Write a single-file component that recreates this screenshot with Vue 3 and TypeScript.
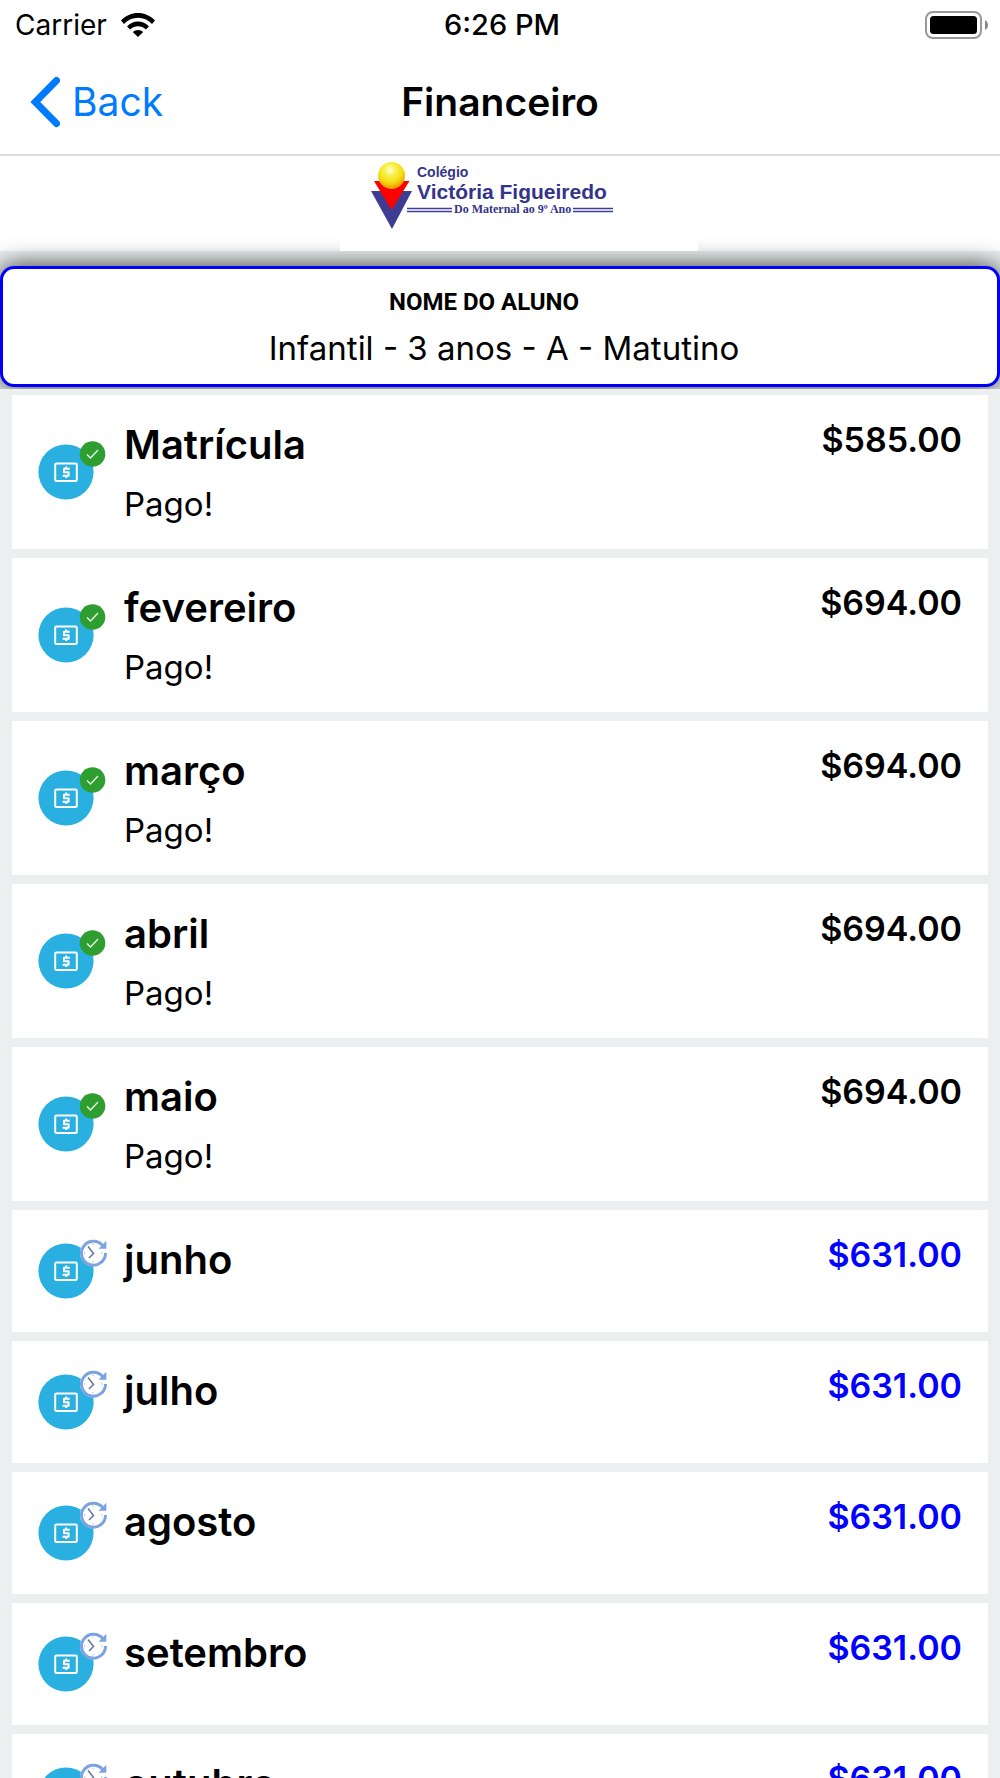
<script setup lang="ts">
interface Installment {
  title: string
  amount: number
  paid: boolean
}

const installments: Installment[] = [
  { title: 'Matrícula', amount: 585, paid: true },
  { title: 'fevereiro', amount: 694, paid: true },
  { title: 'março', amount: 694, paid: true },
  { title: 'abril', amount: 694, paid: true },
  { title: 'maio', amount: 694, paid: true },
  { title: 'junho', amount: 631, paid: false },
  { title: 'julho', amount: 631, paid: false },
  { title: 'agosto', amount: 631, paid: false },
  { title: 'setembro', amount: 631, paid: false },
  { title: 'outubro', amount: 631, paid: false },
]

const money = (value: number): string => `$${value.toFixed(2)}`
</script>

<template>
  <div class="screen">
    <div class="status">
      <div class="carrier">
        <span>Carrier</span>
        <svg class="wifi" viewBox="0 0 34 24" aria-hidden="true">
          <path d="M0 7.6C9-2.4 25-2.4 34 7.6L31 10.9C23.500 2.800 10.500 2.800 3 10.900Z" />
          <path d="M6 13.400C12 7 22 7 28 13.400L24.800 16.500C20.400 12.200 13.600 12.200 9.200 16.500Z" />
          <path d="M11.800 19C14.600 16.300 19.400 16.300 22.200 19L17 24Z" />
        </svg>
      </div>
      <span class="clock">6:26 PM</span>
      <svg class="battery" viewBox="0 0 64 28" aria-hidden="true">
        <rect x="1" y="1" width="55" height="26" rx="7" fill="#fff" stroke="#989898" stroke-width="2" />
        <rect x="5" y="5" width="47" height="18" rx="3.500" fill="#000" />
        <path d="M60 9C64 11 64 17 60 19Z" fill="#888" />
      </svg>
    </div>

    <header class="nav">
      <button class="back" type="button">
        <svg class="chevron" viewBox="0 0 30 52" aria-hidden="true">
          <path d="M26.500 4.500L5.300 26L26.500 47.500" fill="none" stroke="#007aff" stroke-width="7" stroke-linecap="round" />
        </svg>
        <span>Back</span>
      </button>
      <h1>Financeiro</h1>
    </header>

    <div class="brand">
      <svg class="logo" viewBox="0 0 358 95" role="img" aria-label="Colégio Victória Figueiredo">
        <defs>
          <radialGradient id="ball" cx="0.45" cy="0.3" r="0.72">
            <stop offset="0" stop-color="#fffde0" />
            <stop offset="0.3" stop-color="#f8f04a" />
            <stop offset="0.65" stop-color="#f3dc10" />
            <stop offset="1" stop-color="#f08a00" />
          </radialGradient>
        </defs>
        <rect width="358" height="95" fill="#fff" />
        <path d="M31 35H72L52 73Z" fill="#3d3d94" />
        <path d="M34 25H69.500L51.500 54Z" fill="#fe0000" />
        <circle cx="51.500" cy="19.500" r="13.500" fill="url(#ball)" />
        <text class="brand-sans" x="77" y="21" font-size="14">Colégio</text>
        <text class="brand-sans" x="77" y="43" font-size="21">Victória Figueiredo</text>
        <text class="brand-serif" x="114" y="57" font-size="12">Do Maternal ao 9º Ano</text>
        <path d="M67 52.500H112M67 55.500H112M233 52.500H273M233 55.500H273" stroke="#3d3d94" stroke-width="1.500" />
      </svg>
    </div>

    <section class="student">
      <h2>NOME DO ALUNO</h2>
      <p>Infantil - 3 anos - A - Matutino</p>
    </section>

    <ul class="list">
      <li v-for="item in installments" :key="item.title" class="card">
        <svg class="icon" viewBox="0 0 80 76" aria-hidden="true">
          <circle cx="38" cy="38" r="27.600" fill="#2ab0e0" />
          <rect x="27.200" y="29.500" width="21.600" height="17.500" rx="1.200" fill="none" stroke="#fff" stroke-width="2" />
          <path
            d="M41.800 34.800H36V38.200H40.600V41.800H34.600M38.200 32.600V34.800M38.200 41.800V44"
            fill="none"
            stroke="#fff"
            stroke-width="2"
            stroke-linejoin="round"
          />
          <g v-if="item.paid">
            <circle cx="64.500" cy="20" r="12.800" fill="#2f9e30" />
            <path d="M59 20.500L62.500 24L70 16" fill="none" stroke="#e8f6e8" stroke-width="1.300" />
          </g>
          <g v-else>
            <circle cx="65.500" cy="20" r="13.500" fill="#fff" />
            <path d="M74.500 12.200A12 12 0 1 0 77.500 20" fill="none" stroke="#7ba3e2" stroke-width="3" />
            <path d="M78.300 7.800V15.800L70.500 15.800Z" fill="#7ba3e2" />
            <path d="M60 13.500L65.500 20.500L61 25" fill="none" stroke="#62789c" stroke-width="1.500" />
            <path d="M65 10.500V12M65 28V29.500M56 20H57.500M73 20H74.500" stroke="#a9b8d0" stroke-width="1" />
          </g>
        </svg>
        <div class="info">
          <h3>{{ item.title }}</h3>
          <p v-if="item.paid">Pago!</p>
        </div>
        <span class="price" :class="{ due: !item.paid }">{{ money(item.amount) }}</span>
      </li>
    </ul>
  </div>
</template>

<style>
body {
  background: #ebeff0;
}
</style>

<style scoped>
.screen {
  display: flex;
  flex-direction: column;
  height: 100vh;
  overflow: hidden;
  background: #ebeff0;
  color: #000;
  font-family: Inter, "Liberation Sans", sans-serif;
}

h1,
h2,
h3,
p,
ul {
  margin: 0;
  padding: 0;
}

.status,
.nav {
  display: grid;
  grid-template-columns: 1fr auto 1fr;
  align-items: center;
  flex: none;
  background: #fff;
}

.status {
  height: 50px;
  padding: 0 11px 0 15px;
  font-size: 28px;
  line-height: 34px;
}

.carrier {
  display: flex;
  align-items: center;
  gap: 14px;
}

.wifi {
  width: 34px;
  height: 24px;
}

.clock {
  font-size: 29px;
  font-weight: 500;
}

.battery {
  justify-self: end;
  width: 64px;
  height: 28px;
}

.nav {
  height: 104px;
  padding: 0 30px;
  border-bottom: 2px solid #dcdcdc;
}

.back {
  display: flex;
  align-items: center;
  justify-self: start;
  gap: 12px;
  padding: 0;
  border: 0;
  background: none;
  color: #007aff;
  font: inherit;
  font-size: 39px;
  line-height: 48px;
}

.chevron {
  width: 30px;
  height: 52px;
}

h1 {
  font-size: 39px;
  font-weight: 600;
  line-height: 48px;
}

.brand {
  display: flex;
  justify-content: center;
  flex: none;
  padding-left: 38px;
  background: #fff;
}

.logo {
  position: relative;
  z-index: 2;
  width: 358px;
  height: 95px;
}

.brand-sans {
  fill: #34348a;
  font-family: "Liberation Sans", sans-serif;
  font-weight: 700;
}

.brand-serif {
  fill: #34348a;
  font-family: "Liberation Serif", serif;
  font-weight: 700;
}

.student {
  position: relative;
  z-index: 1;
  flex: none;
  margin-top: 15px;
  padding: 17px 0 16px;
  border: 3px solid #0000fa;
  border-radius: 14px;
  background: #fff;
  box-shadow: 0 0 26px rgba(0, 0, 0, 0.8);
  text-align: center;
}

.student h2 {
  padding-right: 32px;
  font-family: "Liberation Sans Narrow", Roboto, sans-serif;
  font-size: 24px;
  font-weight: 700;
  line-height: 32px;
}

.student p {
  margin-top: 10px;
  padding-left: 8px;
  font-size: 33px;
  line-height: 40px;
}

.list {
  position: relative;
  z-index: 2;
  display: flex;
  flex: 1;
  flex-direction: column;
  gap: 9px;
  min-height: 0;
  margin-top: 2px;
  padding: 6px 12px 0;
  overflow-y: auto;
  scrollbar-width: none;
  background: #ebeff0;
  list-style: none;
}

.card {
  display: flex;
  flex: none;
  gap: 16px;
  padding: 23px 26px 23px 16px;
  background: #fff;
}

.icon {
  align-self: center;
  flex: none;
  width: 80px;
  height: 76px;
}

.info {
  flex: 1;
}

h3 {
  font-size: 40px;
  font-weight: 600;
  line-height: 54px;
}

.info p {
  margin-top: 10px;
  font-size: 33px;
  line-height: 44px;
}

.price {
  font-size: 34px;
  font-weight: 600;
  line-height: 44px;
}

.due {
  color: #0000ff;
}
</style>
